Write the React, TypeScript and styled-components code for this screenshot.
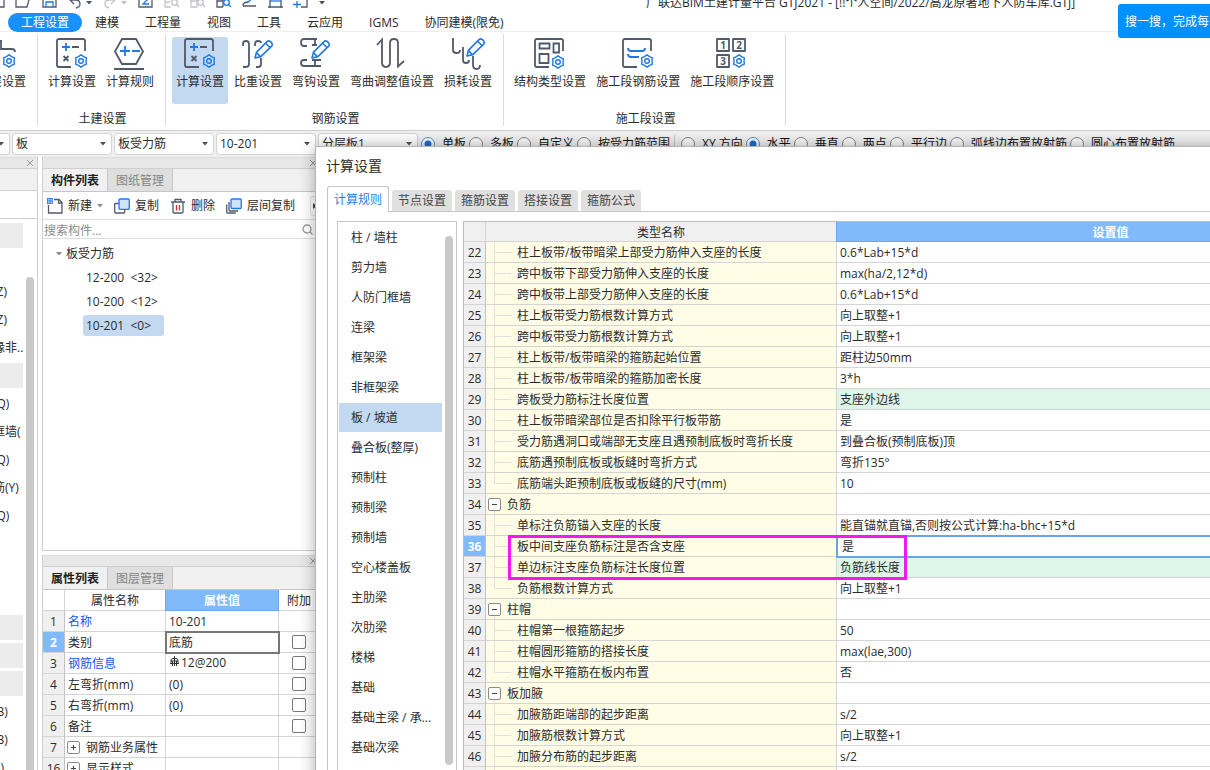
import React from "react";
import styled, { createGlobalStyle, css } from "styled-components";

const INK = "#515a6b";
const BLUE = "#1f78e6";
const LINE = "#cfcfcf";

const Global = createGlobalStyle`
  *, *::before, *::after { box-sizing: border-box; }
  body { margin: 0; background: #fff; }
  body, button, input, select, table {
    font-family: "Open Sans", "Noto Sans CJK SC", sans-serif;
    font-size: 12px;
    line-height: 20px;
    color: #2b2b2b;
  }
  button { border: 0; padding: 0; margin: 0; background: none; cursor: pointer; white-space: nowrap; }
  svg { display: block; flex: none; overflow: visible; }
`;

const Window = styled.div`
  position: relative;
  display: flex;
  flex-direction: column;
  height: 100vh;
  overflow: hidden;
  background: #fff;
`;

/* ---------- title bar ---------- */

const TitleBar = styled.header`
  display: flex;
  align-items: flex-start;
  height: 12px;
  flex: none;
`;
const QuickAccess = styled.div`
  display: flex;
  gap: 10px;
  margin: -8px 0 0 -11px;
`;
const QuickButton = styled.button<{ $dim?: boolean }>`
  display: flex;
  align-items: center;
  gap: 3px;
  opacity: ${(p) => (p.$dim ? 0.35 : 1)};
`;
const QuickCaret = styled.span`
  padding-top: 6px;
`;
const WindowTitle = styled.h1`
  margin: -7px 0 0 321px;
  font-size: 12px;
  font-weight: 400;
  line-height: 20px;
  white-space: nowrap;
`;
const Promo = styled.a`
  position: absolute;
  top: 4px;
  right: 0;
  width: 92px;
  height: 34px;
  padding-left: 7px;
  overflow: hidden;
  border-radius: 3px 0 0 3px;
  background: #0090ff;
  color: #fff;
  line-height: 36px;
  text-decoration: none;
  white-space: nowrap;
`;

/* ---------- menu ---------- */

const Menu = styled.nav`
  display: flex;
  flex: none;
  height: 20px;
  padding: 0 8px;
  border-bottom: 1px solid #efefef;
`;
const MenuItem = styled.button<{ $active?: boolean }>`
  height: 19px;
  margin-top: 1px;
  padding: 0 13px;
  border-radius: 10px;
  line-height: 19px;
  color: ${(p) => (p.$active ? "#fff" : "#2b2b2b")};
  background: ${(p) => (p.$active ? "#1890ff" : "transparent")};
`;

/* ---------- ribbon ---------- */

const Ribbon = styled.div`
  display: flex;
  flex: none;
  height: 98px;
  padding: 2px 0 4px;
`;
const Group = styled.section<{ $cut?: boolean }>`
  display: flex;
  flex-direction: column;
  align-items: ${(p) => (p.$cut ? "flex-end" : "stretch")};
  width: ${(p) => (p.$cut ? "38px" : "auto")};
  overflow: ${(p) => (p.$cut ? "hidden" : "visible")};
  padding: 3px 7px 0 6px;
  border-right: 1px solid #dcdcdc;
`;
const GroupButtons = styled.div`
  display: flex;
  gap: 2px;
`;
const GroupLabel = styled.div`
  height: 16px;
  margin-top: 6px;
  padding-left: 3px;
  line-height: 18px;
  text-align: center;
`;
const RibbonButton = styled.button<{ $active?: boolean }>`
  display: flex;
  flex-direction: column;
  align-items: center;
  height: 67px;
  padding: 0 4px;
  border-radius: 3px;
  line-height: 26px;
  background: ${(p) => (p.$active ? "#c2d9f1" : "transparent")};
`;

/* ---------- option bar ---------- */

const OptionBar = styled.div`
  display: flex;
  align-items: center;
  flex: none;
  height: 27px;
  border-top: 1px solid #d0d0d0;
  background: #f1f1f1;
`;
const Combos = styled.div`
  display: flex;
  gap: 2px;
  margin-left: -90px;
`;
const ComboBox = styled.label`
  display: grid;
  grid-template-columns: 1fr 11px;
  align-items: center;
  width: 100px;
  height: 22px;
  border: 1px solid #d4d4d4;
  border-radius: 3px;
  background: #fff;
  select {
    appearance: none;
    border: 0;
    outline: 0;
    background: none;
    padding: 0 3px;
    height: 20px;
    width: 100%;
  }
`;
const Radios = styled.fieldset`
  display: flex;
  gap: 3px;
  border: 0;
  margin: 0 0 0 3px;
  padding: 0;
`;
const RadioLabel = styled.label`
  display: flex;
  align-items: center;
  gap: 7px;
  line-height: 22px;
  white-space: nowrap;
  color: #111;
`;
const Radio = styled.input`
  appearance: none;
  width: 14px;
  height: 14px;
  margin: 0;
  border: 1px solid #858585;
  border-radius: 50%;
  background: #fbfbfb;
  &:checked {
    background: radial-gradient(circle, #1f6fd0 0 3px, #fbfbfb 4px);
    border-color: #4d8fdc;
  }
`;
const BarDivider = styled.span`
  width: 1px;
  height: 18px;
  margin: 0 3px 0 4px;
  background: #c8c8c8;
`;

/* ---------- docked panels ---------- */

const Workspace = styled.main`
  display: flex;
  flex: 1;
  min-height: 0;
  gap: 4px;
`;
const Strip = styled.div`
  display: flex;
  align-items: center;
  justify-content: flex-end;
  flex: none;
  height: 12px;
  padding-right: 3px;
  border-top: 1px solid #dcdcdc;
  border-bottom: 1px solid ${LINE};
  background: #e8e8e8;
`;
const NavPanel = styled.aside`
  display: flex;
  flex-direction: column;
  width: 38px;
  flex: none;
  border-right: 1px solid ${LINE};
  overflow: hidden;
`;
const NavHead = styled.div`
  flex: none;
  height: 22px;
  border-bottom: 1px solid ${LINE};
  background: #f1f1f1;
`;
const NavTools = styled.div`
  flex: none;
  height: 28px;
  border-bottom: 1px solid ${LINE};
`;
const NavBody = styled.div`
  display: flex;
  flex: 1;
  min-height: 0;
  padding: 4px 3px 0 0;
  justify-content: space-between;
`;
const NavList = styled.ul`
  list-style: none;
  width: 67px;
  flex: none;
  margin: 0 0 0 -43px;
  padding: 0;
`;
const NavRow = styled.li<{ $head?: boolean }>`
  height: 25px;
  margin-bottom: 3px;
  margin-right: 1px;
  line-height: 26px;
  white-space: nowrap;
  background: ${(p) => (p.$head ? "#ececec" : "transparent")};
`;
const NavScroll = styled.span`
  width: 8px;
  margin-top: 54px;
  border-radius: 4px 4px 0 0;
  background: #c9c9c9;
`;
const Dock = styled.div`
  display: flex;
  flex-direction: column;
  gap: 4px;
  width: 279px;
  flex: none;
`;
const Panel = styled.section<{ $fixed?: boolean }>`
  display: flex;
  flex-direction: column;
  flex: ${(p) => (p.$fixed ? "0 0 215px" : "1")};
  min-height: 0;
  overflow: hidden;
  border: 1px solid ${LINE};
  border-width: ${(p) => (p.$fixed ? "0 1px" : "0 1px 1px")};
`;
const DockTabs = styled.div`
  display: flex;
  flex: none;
  height: 23px;
  border-bottom: 1px solid #c4c6ca;
  background: #f1f1f1;
`;
const DockTab = styled.button<{ $active?: boolean }>`
  width: 65px;
  height: 22px;
  border-right: 1px solid #c4c6ca;
  line-height: 24px;
  font-weight: ${(p) => (p.$active ? 700 : 400)};
  color: ${(p) => (p.$active ? "#222" : "#858585")};
  background: ${(p) => (p.$active ? "#f1f1f1" : "#dfdfdf")};
`;
const PanelTools = styled.div`
  display: flex;
  flex: none;
  align-items: center;
  gap: 11px;
  height: 28px;
  padding-left: 4px;
  border-bottom: 1px solid #dedede;
`;
const PanelTool = styled.button`
  display: flex;
  align-items: center;
  gap: 5px;
  line-height: 22px;
`;
const MoreTools = styled.button`
  display: flex;
  align-items: center;
  width: 16px;
  height: 20px;
  margin-left: 4px;
  padding-left: 2px;
  border: 1px solid #e2e2e2;
  border-radius: 3px;
`;
const SearchRow = styled.label`
  display: flex;
  flex: none;
  align-items: center;
  height: 19px;
  padding: 0 7px 0 1px;
  border-bottom: 1px solid #dedede;
  input {
    flex: 1;
    min-width: 0;
    height: 18px;
    padding: 2px 0 0;
    border: 0;
    outline: 0;
    line-height: 16px;
  }
  input::placeholder { color: #8d8d8d; opacity: 1; }
`;
const Tree = styled.ul`
  list-style: none;
  margin: 0;
  padding: 3px 0 0 13px;
`;
const TreeRoot = styled.li`
  display: flex;
  align-items: center;
  gap: 4px;
  height: 24px;
`;
const TreeLeaf = styled.li`
  display: flex;
  align-items: center;
  height: 24px;
  padding: 0 0 2px 27px;
`;
const LeafText = styled.span<{ $active?: boolean }>`
  padding: 0 7px 0 3px;
  line-height: 21px;
  border-radius: 3px;
  white-space: pre;
  background: ${(p) => (p.$active ? "#c2d9f1" : "transparent")};
`;

/* ---------- grids ---------- */

const Grid = styled.table`
  width: 100%;
  table-layout: fixed;
  border-collapse: separate;
  border-spacing: 0;
  th, td {
    height: 21px;
    padding: 2px 3px 0;
    border-right: 1px solid #d4d4d4;
    border-bottom: 1px solid #d4d4d4;
    font-weight: 400;
    line-height: 18px;
    text-align: left;
    white-space: nowrap;
    overflow: hidden;
  }
`;
const HeadRow = styled.tr<{ $shaded?: boolean }>`
  && th {
    height: ${(p) => (p.$shaded ? 20 : 21)}px;
    line-height: ${(p) => (p.$shaded ? 17 : 18)}px;
    text-align: center;
    background: ${(p) => (p.$shaded ? "#f0f0f0" : "#fff")};
  }
`;
const blueCell = css`
  background: #80bafa;
  color: #fff;
  font-weight: 700;
`;
const HotHead = styled.th`
  &&&& {
    ${blueCell}
    border-color: #6aa9ea;
    box-shadow: -1px 0 #6aa9ea;
    overflow: visible;
  }
`;
const NumCell = styled.th<{ $active?: boolean }>`
  &&& {
    padding: 2px 0 0;
    text-align: center;
    background: #f0f0f0;
    border-right-color: #c2c2c2;
    ${(p) => p.$active && blueCell}
  }
`;
const PropName = styled.td<{ $link?: boolean }>`
  color: ${(p) => (p.$link ? "#1455ff" : "#2b2b2b")};
`;
const Inline = styled.span`
  display: flex;
  align-items: center;
  gap: 6px;
  margin-left: -1px;
`;
const RebarValue = styled.span`
  display: flex;
  gap: 1px;
  height: 18px;
  line-height: 16px;
`;
const PropValue = styled.td<{ $focus?: boolean }>`
  ${(p) => p.$focus && "outline: 2px solid #777; outline-offset: -1px;"}
`;
const CheckCell = styled.td`
  && { padding: 0; }
  input {
    display: block;
    appearance: none;
    width: 14px;
    height: 14px;
    margin: 0 auto;
    border: 1px solid #777;
    border-radius: 2px;
    background: #fff;
  }
`;
const Toggle = styled.button`
  width: 13px;
  height: 13px;
  flex: none;
  display: grid;
  place-items: center;
  margin-bottom: 2px;
  border: 1px solid #8a8a8a;
  border-radius: 2px;
  background: #fff;
`;

/* ---------- dialog ---------- */

const Dialog = styled.section`
  position: absolute;
  top: 147px;
  bottom: -20px;
  left: 316px;
  width: 1080px;
  display: flex;
  flex-direction: column;
  padding: 0 10px;
  background: #fff;
  box-shadow: 0 0 0 1px #b4b4b4, 0 0 16px rgba(0, 0, 0, 0.36);
`;
const DialogTitle = styled.h2`
  flex: none;
  height: 39px;
  margin: 0;
  font-size: 14px;
  font-weight: 400;
  line-height: 37px;
`;
const DialogTabs = styled.div`
  display: flex;
  flex: none;
  align-items: flex-end;
  gap: 3px;
  height: 26px;
  margin-left: 1px;
  border-bottom: 1px solid #c4c6ca;
`;
const DialogTab = styled.button<{ $active?: boolean }>`
  width: 60px;
  height: 21px;
  border-radius: 3px 3px 0 0;
  line-height: 22px;
  color: #444;
  background: #e0e0e0;
  ${(p) =>
    p.$active &&
    css`
      width: 62px;
      height: 26px;
      margin-bottom: -1px;
      border: 1px solid #c4c6ca;
      border-bottom: 0;
      line-height: 25px;
      color: #2a7fe8;
      background: #fff;
    `}
`;
const DialogBody = styled.div`
  display: flex;
  flex: 1;
  min-height: 0;
  gap: 6px;
  margin-left: 1px;
  padding: 9px 0 0 9px;
  border-left: 1px solid #c4c6ca;
`;
const CategoryBox = styled.div`
  display: flex;
  width: 120px;
  flex: none;
  padding: 1px 3px 24px 1px;
  border: 1px solid #c8c8c8;
`;
const CategoryList = styled.ul`
  flex: 1;
  list-style: none;
  margin: 0 3px 0 0;
  padding: 0;
`;
const Category = styled.li<{ $active?: boolean }>`
  height: 29px;
  margin-bottom: 1px;
  padding-left: 12px;
  line-height: 30px;
  white-space: nowrap;
  background: ${(p) => (p.$active ? "#c2d9f1" : "transparent")};
`;
const CategoryScroll = styled.span`
  width: 8px;
  margin-top: 13px;
  border-radius: 4px;
  background: #c9c9c9;
`;
const RuleBox = styled.div`
  position: relative;
  flex: 1;
  overflow: hidden;
  border: 1px solid #bdbdbd;
`;
const RuleName = styled.td<{ $kind: "group" | "item" | "last" }>`
  &&& {
    padding-left: ${(p) => (p.$kind === "group" ? 3 : 31)}px;
    background-color: #fffde6;
    background-repeat: no-repeat;
    background-image: linear-gradient(#e0e0e0, #e0e0e0), linear-gradient(#e0e0e0, #e0e0e0);
    background-position: 8px ${(p) => (p.$kind === "group" ? 15 : 0)}px, 8px 10px;
    background-size: 1px ${(p) => (p.$kind === "last" ? 10 : 21)}px,
      ${(p) => (p.$kind === "group" ? 0 : 17)}px 1px;
  }
`;
const RuleValue = styled.td<{ $green?: boolean; $focus?: boolean }>`
  background: ${(p) => (p.$green ? "#def5ea" : "#fff")};
  ${(p) =>
    p.$focus &&
    css`
      &&& { padding-left: 5px; }
      outline: 2px solid #66a5ea;
      outline-offset: -1px;
    `}
`;
const Highlight = styled.div`
  position: absolute;
  top: 313px;
  left: 44px;
  width: 399px;
  height: 45px;
  border: 3px solid #f31af0;
  pointer-events: none;
`;

/* ---------- drawings ---------- */

const Caret = ({ color = "#4b5160" }: { color?: string }) => (
  <svg width="6" height="4" viewBox="0 0 6 4"><path d="M0 0h6L3 3.6z" fill={color} /></svg>
);
const Cross = () => (
  <svg width="8" height="8" viewBox="0 0 8 8"><path d="M1 1l6 6M7 1L1 7" stroke="#999" /></svg>
);

const gearPoints = Array.from({ length: 12 }, (_, i) => {
  const a = (Math.PI / 6) * i - Math.PI / 2;
  const r = i % 2 ? 5 : 6.2;
  return `${(Math.cos(a) * r).toFixed(2)},${(Math.sin(a) * r).toFixed(2)}`;
}).join(" ");

const Gear = ({ x, y }: { x: number; y: number }) => (
  <g transform={`translate(${x} ${y})`} stroke={BLUE} strokeWidth="1.4" fill="none" strokeLinejoin="round">
    <polygon points={gearPoints} />
    <circle r="2.3" />
  </g>
);
const Pencil = ({ x = 0, y = 0 }: { x?: number; y?: number }) => (
  <g transform={`translate(${x} ${y})`} stroke={BLUE} strokeWidth="1.6" fill="#fff" strokeLinejoin="round">
    <path d="M13 21l1.4-5.6L25 4.6q1.600-1.400 3.400 0l1.300 1.300q1.300 1.600 0 3.200L18.800 19.600z" />
    <path d="M23.600 6.200l4.600 4.600M14.400 15.600l4 4" fill="none" />
  </g>
);
const Frame = () => <path d="M29 14V4q0-2-2-2H3Q1 2 1 4v24q0 2 2 2h12" />;

type IconName =
  | "floor" | "calc" | "rule" | "weight" | "hook" | "bend" | "loss" | "struct" | "stage" | "order";

const drawings: Record<IconName, React.ReactNode> = {
  floor: (
    <>
      <path d="M2 30V4h13v8h11q3 0 3 3M2 20h10" />
      <Gear x={23} y={24} />
    </>
  ),
  calc: (
    <>
      <Frame />
      <path d="M10 6v8M6 10h8" stroke={BLUE} />
      <path d="M16 10h7M7.500 19l5 5M12.500 19l-5 5" />
      <Gear x={25} y={24} />
    </>
  ),
  rule: (
    <>
      <path d="M8 2h14l7 12.500L22 27H8L1 14.500zM0 32h30" />
      <path d="M11 9v10M6 14h10M18 14h8" stroke={BLUE} />
    </>
  ),
  weight: (
    <>
      <path d="M1 9V7q0-3 3-3t3 3v20q0 3-4 3H1M13 9V7q0-3 3-3t3 2M19 21v6q0 3-3 3h-2" />
      <Pencil />
    </>
  ),
  hook: (
    <>
      <path d="M7 9H4Q1 9 1 5.500T4 2h13M15 2v6M12 8h5M7 23H4q-3 0-3 3t3 3h17M15 29v-5M12 23h9" />
      <Pencil x={-1} />
    </>
  ),
  bend: <path d="M1 8l5-5.500V25q0 5 4 5t4-5V6q0-4 4-4t4 4v23.500l6-5.500" />,
  loss: (
    <>
      <path d="M1 1v12q0 3 3.500 3T8 13M11 10v13q0 3 3 3t3-3M21 19v9q0 4 3.500 4t3.500-4" />
      <Pencil x={2} y={-2} />
    </>
  ),
  struct: (
    <>
      <Frame />
      <path d="M5.500 6.500h10v5h-10zM19.500 6.500h5.500v9h-5.500zM5.500 17h9v9h-9z" />
      <Gear x={24} y={25} />
    </>
  ),
  stage: (
    <>
      <Frame />
      <path d="M6 11q0 3 3 3h11q3 0 3-3M6 17q0 3 3 3h8" stroke={BLUE} />
      <Gear x={25} y={24} />
    </>
  ),
  order: (
    <>
      <path d="M1 2h12v12H1zM17 2h12v12H17zM1 18h12v12H1z" strokeLinejoin="round" />
      <g fill={INK} stroke="none" fontSize="10" fontWeight="700" textAnchor="middle">
        <text x="7" y="12">1</text>
        <text x="23" y="12">2</text>
        <text x="7" y="28">3</text>
      </g>
      <Gear x={23} y={24} />
    </>
  ),
};
const BigIcon = ({ name }: { name: IconName }) => (
  <svg width="32" height="32" viewBox="0 0 32 32" fill="none" stroke={INK} strokeWidth="1.800">
    {drawings[name]}
  </svg>
);
const SmallIcon = ({ children }: { children: React.ReactNode }) => (
  <svg width="16" height="16" viewBox="0 0 16 16" fill="none" stroke={INK} strokeWidth="1.300">
    {children}
  </svg>
);
const lens = (color: string) => (
  <g stroke={color}><circle cx="11.500" cy="10.500" r="2.800" /><path d="M13.500 12.500l2.500 2.500" /></g>
);

const quick: { label: string; dim?: boolean; caret?: boolean; art: React.ReactNode }[] = [
  { label: "新建", art: <path d="M2 1h13v14H2z" /> },
  { label: "打开", art: <path d="M1 15V2h5l2 2h7l-3 11zM15 4l-3 11" /> },
  { label: "保存", art: <><path d="M2 2h13v13H2z" /><path d="M5 15v-5h7v5" stroke={BLUE} /></> },
  { label: "撤销", caret: true, art: <path d="M7 4L3 8l4 4M3 8h6q4 0 4 4 0 3-4 4" /> },
  { label: "恢复", caret: true, dim: true, art: <path d="M9 4l4 4-4 4M13 8H7q-4 0-4 4 0 3 4 4" /> },
  { label: "汇总", art: <><path d="M2 1h13v14H2z" /><path d="M12 4H6l4 4-4 4h6" stroke={BLUE} /></> },
  { label: "查看", dim: true, art: <><path d="M2 1v14h6M2 10h5" />{lens(INK)}</> },
  { label: "表格", dim: true, art: <><path d="M2 1v14h6M2 9h6M8 1v14M8 5h7" />{lens(INK)}</> },
  { label: "定位", art: <><path d="M2 1v14h6M2 9h6M8 5v10M8 6h8" />{lens(BLUE)}</> },
  { label: "测量", art: <><path d="M2 14h13M2 14q0-4 5-4" /><path d="M6 11l7-6" stroke={BLUE} /></> },
  { label: "区域", art: <><path d="M3 1v15M14 1v15M1 15h15" /><path d="M3 9h11" stroke={BLUE} /></> },
  { label: "选择", art: <><path d="M8 15h6V1H3v6" /><path d="M4 9v7M0 12.500h8" stroke={BLUE} /></> },
];

const menu = ["工程设置", "建模", "工程量", "视图", "工具", "云应用", "IGMS", "协同建模(限免)"];

const groups: { label: string; cut?: boolean; items: [string, IconName, boolean?][] }[] = [
  { label: "", cut: true, items: [["楼层设置", "floor"]] },
  { label: "土建设置", items: [["计算设置", "calc"], ["计算规则", "rule"]] },
  {
    label: "钢筋设置",
    items: [
      ["计算设置", "calc", true], ["比重设置", "weight"], ["弯钩设置", "hook"],
      ["弯曲调整值设置", "bend"], ["损耗设置", "loss"],
    ],
  },
  {
    label: "施工段设置",
    items: [["结构类型设置", "struct"], ["施工段钢筋设置", "stage"], ["施工段顺序设置", "order"]],
  },
];

const combos = ["首层", "板", "板受力筋", "10-201", "分层板1"];
const rangeModes = ["单板", "多板", "自定义", "按受力筋范围"];
const directionModes = ["XY 方向", "水平", "垂直", "两点", "平行边", "弧线边布置放射筋", "圆心布置放射筋"];

/* null is a section heading, an empty string a row scrolled out of sight */
const navRows: (string | null)[] = [
  null, "", "构造柱(Z)", "砌体柱(Z)", "约束边缘非..", null, "剪力墙(Q)", "人防门框墙(", "砌体墙(Q)",
  "砌体加筋(Y)", "保温墙(Q)", "", "", "", null, null, null, "现浇板(B)", "螺旋板(B)", "坡道(PD)",
];

const categories = [
  "柱 / 墙柱", "剪力墙", "人防门框墙", "连梁", "框架梁", "非框架梁", "板 / 坡道", "叠合板(整厚)", "预制柱",
  "预制梁", "预制墙", "空心楼盖板", "主肋梁", "次肋梁", "楼梯", "基础", "基础主梁 / 承...", "基础次梁",
];

type Rule = { n: number; name: string; value?: string; kind?: "group" | "last"; green?: boolean; focus?: boolean };
const rules: Rule[] = [
  { n: 22, name: "柱上板带/板带暗梁上部受力筋伸入支座的长度", value: "0.6*Lab+15*d" },
  { n: 23, name: "跨中板带下部受力筋伸入支座的长度", value: "max(ha/2,12*d)" },
  { n: 24, name: "跨中板带上部受力筋伸入支座的长度", value: "0.6*Lab+15*d" },
  { n: 25, name: "柱上板带受力筋根数计算方式", value: "向上取整+1" },
  { n: 26, name: "跨中板带受力筋根数计算方式", value: "向上取整+1" },
  { n: 27, name: "柱上板带/板带暗梁的箍筋起始位置", value: "距柱边50mm" },
  { n: 28, name: "柱上板带/板带暗梁的箍筋加密长度", value: "3*h" },
  { n: 29, name: "跨板受力筋标注长度位置", value: "支座外边线", green: true },
  { n: 30, name: "柱上板带暗梁部位是否扣除平行板带筋", value: "是" },
  { n: 31, name: "受力筋遇洞口或端部无支座且遇预制底板时弯折长度", value: "到叠合板(预制底板)顶" },
  { n: 32, name: "底筋遇预制底板或板缝时弯折方式", value: "弯折135°" },
  { n: 33, name: "底筋端头距预制底板或板缝的尺寸(mm)", value: "10", kind: "last" },
  { n: 34, name: "负筋", kind: "group" },
  { n: 35, name: "单标注负筋锚入支座的长度", value: "能直锚就直锚,否则按公式计算:ha-bhc+15*d" },
  { n: 36, name: "板中间支座负筋标注是否含支座", value: "是", focus: true },
  { n: 37, name: "单边标注支座负筋标注长度位置", value: "负筋线长度", green: true },
  { n: 38, name: "负筋根数计算方式", value: "向上取整+1", kind: "last" },
  { n: 39, name: "柱帽", kind: "group" },
  { n: 40, name: "柱帽第一根箍筋起步", value: "50" },
  { n: 41, name: "柱帽圆形箍筋的搭接长度", value: "max(lae,300)" },
  { n: 42, name: "柱帽水平箍筋在板内布置", value: "否", kind: "last" },
  { n: 43, name: "板加腋", kind: "group" },
  { n: 44, name: "加腋筋距端部的起步距离", value: "s/2" },
  { n: 45, name: "加腋筋根数计算方式", value: "向上取整+1" },
  { n: 46, name: "加腋分布筋的起步距离", value: "s/2" },
  { n: 47, name: "" },
];

type Prop = { n: number; name: string; value?: string; link?: boolean; check?: boolean; fold?: boolean; rebar?: boolean };
const props: Prop[] = [
  { n: 1, name: "名称", value: "10-201", link: true },
  { n: 2, name: "类别", value: "底筋", check: true },
  { n: 3, name: "钢筋信息", value: "12@200", link: true, check: true, rebar: true },
  { n: 4, name: "左弯折(mm)", value: "(0)", check: true },
  { n: 5, name: "右弯折(mm)", value: "(0)", check: true },
  { n: 6, name: "备注", check: true },
  { n: 7, name: "钢筋业务属性", fold: true },
  { n: 16, name: "显示样式", fold: true },
];

const FoldButton = ({ open, label }: { open?: boolean; label: string }) => (
  <Toggle aria-label={label}>
    <svg width="7" height="7" viewBox="0 0 7 7">
      <path d={open ? "M1 3.500h5" : "M1 3.500h5M3.500 1v5"} stroke="#444" />
    </svg>
  </Toggle>
);

const RadioOption = ({ group, text, checked }: { group: string; text: string; checked?: boolean }) => (
  <RadioLabel><Radio type="radio" name={group} defaultChecked={checked} />{text}</RadioLabel>
);

export default function App() {
  return (
    <Window>
      <Global />
      <TitleBar>
        <QuickAccess>
          {quick.map((q) => (
            <QuickButton key={q.label} aria-label={q.label} $dim={q.dim}>
              <SmallIcon>{q.art}</SmallIcon>
              {q.caret && <QuickCaret><Caret /></QuickCaret>}
            </QuickButton>
          ))}
          <QuickButton aria-label="更多"><QuickCaret><Caret /></QuickCaret></QuickButton>
        </QuickAccess>
        <WindowTitle>广联达BIM土建计量平台 GTJ2021 - [!!个人空间/2022/高龙原著地下人防车库.GTJ]</WindowTitle>
      </TitleBar>

      <Menu>
        {menu.map((m, i) => <MenuItem key={m} $active={i === 0}>{m}</MenuItem>)}
      </Menu>
      <Promo href="#search">搜一搜，完成每</Promo>

      <Ribbon>
        {groups.map((g) => (
          <Group key={g.label} $cut={g.cut}>
            <GroupButtons>
              {g.items.map(([label, icon, active]) => (
                <RibbonButton key={label} $active={active}><BigIcon name={icon} />{label}</RibbonButton>
              ))}
            </GroupButtons>
            <GroupLabel>{g.label}</GroupLabel>
          </Group>
        ))}
      </Ribbon>

      <OptionBar>
        <Combos>
          {combos.map((c) => (
            <ComboBox key={c}>
              <select aria-label={c}><option>{c}</option></select>
              <Caret />
            </ComboBox>
          ))}
        </Combos>
        <Radios>
          {rangeModes.map((r, i) => <RadioOption key={r} group="range" text={r} checked={i === 0} />)}
        </Radios>
        <BarDivider />
        <Radios>
          {directionModes.map((r, i) => <RadioOption key={r} group="direction" text={r} checked={i === 1} />)}
        </Radios>
      </OptionBar>

      <Workspace>
        <NavPanel>
          <Strip><Cross /></Strip>
          <NavHead />
          <NavTools />
          <NavBody>
            <NavList>
              {navRows.map((r, i) => <NavRow key={i} $head={r === null}>{r}</NavRow>)}
            </NavList>
            <NavScroll />
          </NavBody>
        </NavPanel>

        <Dock>
          <Panel>
            <Strip><Cross /></Strip>
            <DockTabs>
              <DockTab $active>构件列表</DockTab>
              <DockTab>图纸管理</DockTab>
            </DockTabs>
            <PanelTools>
              <PanelTool>
                <SmallIcon>
                  <path d="M7 1.500h5l3 3v10.500H1.500V7M11.500 1.500V5H15" />
                  <path d="M0 .7h5M0 3h5M0 5.300h5M.7 0v6M3 0v6M5.300 0v6" stroke={BLUE} strokeWidth="1" />
                </SmallIcon>
                新建
                <Caret color="#8a8f99" />
              </PanelTool>
              <PanelTool>
                <SmallIcon>
                  <path d="M5 5.500H1q-.3 0-.3.500v8q0 1 1 1h8q1 0 1-1v-2" />
                  <rect x="5" y="1" width="10.300" height="10.300" rx="1" fill="#cfe4fb" stroke={BLUE} />
                </SmallIcon>
                复制
              </PanelTool>
              <PanelTool>
                <SmallIcon>
                  <path d="M1 4h14M5 4V1.500h6V4M3 4v10q0 1 1 1h8q1 0 1-1V4" />
                  <path d="M6.500 7v5.500M9.500 7v5.500" stroke="#e0262b" />
                </SmallIcon>
                删除
              </PanelTool>
              <PanelTool>
                <SmallIcon>
                  <path d="M3 4v8q0 1 1 1h8M.7 6.500V14q0 1 1 1h8" />
                  <rect x="5" y="1" width="10.300" height="9.500" rx="1" fill="#cfe4fb" stroke={BLUE} />
                </SmallIcon>
                层间复制
              </PanelTool>
              <MoreTools aria-label="更多工具">
                <svg width="4" height="6" viewBox="0 0 4 6"><path d="M0 0v6l3.500-3z" fill="#444" /></svg>
              </MoreTools>
            </PanelTools>
            <SearchRow>
              <input type="text" aria-label="搜索构件" placeholder="搜索构件..." />
              <svg width="11" height="11" viewBox="0 0 11 11" fill="none" stroke="#9a9a9a" strokeWidth="1.300">
                <circle cx="5" cy="5" r="4" /><path d="M8 8l2.500 2.500" />
              </svg>
            </SearchRow>
            <Tree>
              <TreeRoot><Caret color="#888" />板受力筋</TreeRoot>
              <TreeLeaf><LeafText>{"12-200  <32>"}</LeafText></TreeLeaf>
              <TreeLeaf><LeafText>{"10-200  <12>"}</LeafText></TreeLeaf>
              <TreeLeaf><LeafText $active>{"10-201  <0>  "}</LeafText></TreeLeaf>
            </Tree>
          </Panel>

          <Panel $fixed>
            <Strip><Cross /></Strip>
            <DockTabs>
              <DockTab $active>属性列表</DockTab>
              <DockTab>图层管理</DockTab>
            </DockTabs>
            <Grid>
              <colgroup>
                <col style={{ width: 22 }} /><col style={{ width: 101 }} /><col style={{ width: 113 }} /><col />
              </colgroup>
              <thead>
                <HeadRow><th /><th>属性名称</th><HotHead>属性值</HotHead><th>附加</th></HeadRow>
              </thead>
              <tbody>
                {props.map((p) => (
                  <tr key={p.n}>
                    <NumCell $active={p.n === 2}>{p.n}</NumCell>
                    <PropName $link={p.link}>
                      {p.fold ? <Inline><FoldButton label={p.name} />{p.name}</Inline> : p.name}
                    </PropName>
                    <PropValue $focus={p.n === 2}>
                      {p.rebar ? (
                        <RebarValue>
                          <svg width="11" height="14" viewBox="0 0 11 14" fill="none" stroke="#333">
                            <path d="M2 8.500V5.500q0-2 2-2h3q2 0 2 2v3M1 8.500h9M5.500 1v10M3.500 6v5M7.500 6v5M2 6h7" />
                          </svg>
                          {p.value}
                        </RebarValue>
                      ) : p.value}
                    </PropValue>
                    <CheckCell>{p.check && <input type="checkbox" aria-label={`${p.name} 附加`} />}</CheckCell>
                  </tr>
                ))}
              </tbody>
            </Grid>
          </Panel>
        </Dock>
      </Workspace>

      <Dialog role="dialog" aria-label="计算设置">
        <DialogTitle>计算设置</DialogTitle>
        <DialogTabs>
          {["计算规则", "节点设置", "箍筋设置", "搭接设置", "箍筋公式"].map((t, i) => (
            <DialogTab key={t} $active={i === 0}>{t}</DialogTab>
          ))}
        </DialogTabs>
        <DialogBody>
          <CategoryBox>
            <CategoryList>
              {categories.map((c) => <Category key={c} $active={c === "板 / 坡道"}>{c}</Category>)}
            </CategoryList>
            <CategoryScroll />
          </CategoryBox>
          <RuleBox>
            <Grid>
              <colgroup>
                <col style={{ width: 22 }} /><col style={{ width: 351 }} /><col />
              </colgroup>
              <thead>
                <HeadRow $shaded><th /><th>类型名称</th><HotHead>设置值</HotHead></HeadRow>
              </thead>
              <tbody>
                {rules.map((r) => (
                  <tr key={r.n}>
                    <NumCell $active={r.focus}>{r.n}</NumCell>
                    <RuleName $kind={r.kind ?? "item"}>
                      {r.kind === "group" ? <Inline><FoldButton open label={r.name} />{r.name}</Inline> : r.name}
                    </RuleName>
                    <RuleValue $green={r.green} $focus={r.focus}>{r.value}</RuleValue>
                  </tr>
                ))}
              </tbody>
            </Grid>
            <Highlight />
          </RuleBox>
        </DialogBody>
      </Dialog>
    </Window>
  );
}
